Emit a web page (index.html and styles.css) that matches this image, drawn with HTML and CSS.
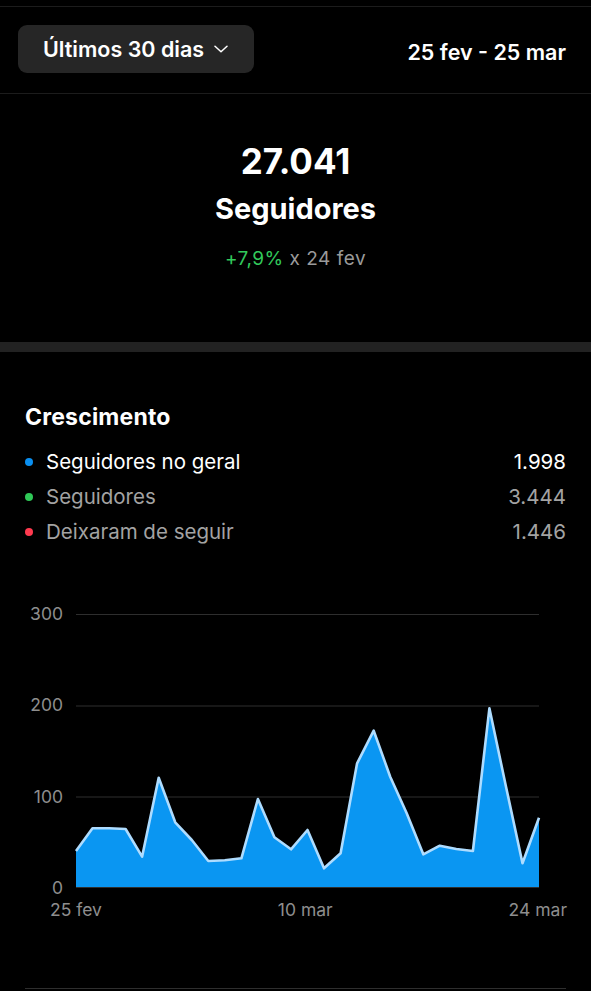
FILE: index.html
```html
<!DOCTYPE html>
<html lang="pt">
<head>
<meta charset="utf-8">
<title>Seguidores</title>
<link rel="stylesheet" href="styles.css">
</head>
<body>
<div class="page">
  <header class="header">
    <button class="range-btn">Últimos 30 dias
      <svg class="chev" width="14" height="8" viewBox="0 0 14 8"><path d="M1 1.2 L7 6.8 L13 1.2" fill="none" stroke="#fff" stroke-width="1.5" stroke-linecap="round" stroke-linejoin="round"/></svg>
    </button>
    <div class="date-range">25 fev - 25 mar</div>
  </header>

  <section class="summary">
    <div class="big-num">27.041</div>
    <div class="big-label">Seguidores</div>
    <div class="delta"><span class="pos">+7,9%</span> x 24 fev</div>
  </section>

  <div class="thick-sep"></div>

  <section class="growth">
    <h2 class="growth-title">Crescimento</h2>
    <ul class="legend">
      <li class="legend-row primary"><span class="dot blue"></span><span class="lname">Seguidores no geral</span><span class="lval">1.998</span></li>
      <li class="legend-row"><span class="dot green"></span><span class="lname">Seguidores</span><span class="lval">3.444</span></li>
      <li class="legend-row"><span class="dot red"></span><span class="lname">Deixaram de seguir</span><span class="lval">1.446</span></li>
    </ul>

    <div class="chart">
      <div class="y-axis">
        <span>300</span><span>200</span><span>100</span><span>0</span>
      </div>
      <svg class="plot" width="463" height="274" viewBox="0 0 463 274">
        <g stroke="#2e2e2e" stroke-width="1">
          <line x1="0" y1="0.5" x2="463" y2="0.5"/>
          <line x1="0" y1="92" x2="463" y2="92"/>
          <line x1="0" y1="183" x2="463" y2="183"/>
        </g>
        <polygon fill="#0a96f2" points="0,274 0,237 16.5,214.3 33.1,214.3 49.6,215 66.1,242.7 82.7,163.7 99.2,208.3 115.8,226 132.3,247 148.8,246.3 165.4,244.3 181.9,185 198.4,223.3 215,235.3 231.5,216 248,254.3 264.6,239.3 281.1,149.3 297.7,116.7 314.2,162.7 330.7,199.3 347.3,240.3 363.8,231.7 380.3,235 396.9,237 413.4,94.3 430,172.7 446.5,249.3 463,203.7 463,274"/>
        <polyline fill="none" stroke="#aedcff" stroke-width="2.6" stroke-linejoin="round" points="0,237 16.5,214.3 33.1,214.3 49.6,215 66.1,242.7 82.7,163.7 99.2,208.3 115.8,226 132.3,247 148.8,246.3 165.4,244.3 181.9,185 198.4,223.3 215,235.3 231.5,216 248,254.3 264.6,239.3 281.1,149.3 297.7,116.7 314.2,162.7 330.7,199.3 347.3,240.3 363.8,231.7 380.3,235 396.9,237 413.4,94.3 430,172.7 446.5,249.3 463,203.7"/>
        <line x1="0" y1="273.5" x2="463" y2="273.5" stroke="#2e2e2e" stroke-width="1"/>
      </svg>
    </div>
    <div class="x-axis">
      <span>25 fev</span><span>10 mar</span><span>24 mar</span>
    </div>
    <div class="bottom-line"></div>
  </section>
</div>
</body>
</html>
```

FILE: styles.css
```css
html, body {
  margin: 0;
  padding: 0;
  background: #000;
}
body {
  font-family: Inter, "Noto Sans", "Liberation Sans", sans-serif;
  color: #fff;
  width: 591px;
  height: 991px;
  overflow: hidden;
}
.page {
  padding-top: 6px;
}
.header {
  border-top: 1px solid #1c1c1c;
  border-bottom: 1px solid #1c1c1c;
  height: 86px;
  box-sizing: content-box;
  display: flex;
  align-items: center;
  justify-content: space-between;
  padding: 0 25px 0 18px;
}
.range-btn {
  margin-top: -3px;
  width: 236px;
  height: 48px;
  background: #262626;
  border: none;
  border-radius: 9px;
  color: #fff;
  font-family: inherit;
  font-size: 21.5px;
  font-weight: 600;
  line-height: 26px;
  display: flex;
  align-items: center;
  padding: 0 0 0 25px;
  gap: 10px;
}
.chev {
  display: block;
  margin-top: 1px;
}
.date-range {
  font-size: 21.5px;
  font-weight: 600;
  line-height: 26px;
  margin-top: 3px;
}
.summary {
  height: 248px;
  padding-top: 46px;
  box-sizing: border-box;
  display: flex;
  flex-direction: column;
  align-items: center;
}
.big-num {
  font-size: 35px;
  font-weight: 700;
  line-height: 42px;
}
.big-label {
  margin-top: 10px;
  font-size: 29px;
  font-weight: 700;
  line-height: 34px;
}
.delta {
  margin-top: 22px;
  font-size: 19px;
  line-height: 22px;
  letter-spacing: 0.5px;
  color: #9a9a9a;
}
.pos {
  color: #32c95b;
}
.thick-sep {
  height: 10px;
  background: #222;
}
.growth {
  padding: 52px 25px 0 25px;
}
.growth-title {
  margin: 0;
  font-size: 23px;
  font-weight: 700;
  line-height: 26px;
  letter-spacing: 0.2px;
}
.legend {
  list-style: none;
  margin: 14px 0 0 0;
  padding: 0;
}
.legend-row {
  display: flex;
  align-items: center;
  height: 35px;
  font-size: 20.5px;
  color: #a3a3a3;
}
.legend-row.primary {
  color: #fff;
}
.dot {
  width: 8px;
  height: 8px;
  border-radius: 50%;
  margin: 0 13px 0 0;
}
.dot.blue { background: #0a8ff0; }
.dot.green { background: #2fc857; }
.dot.red { background: #ff3a4f; }
.lname {
  flex: 1;
}
.lval {
  text-align: right;
}
.chart {
  margin-top: 65px;
  display: flex;
  align-items: flex-start;
}
.y-axis {
  width: 38px;
  height: 294px;
  margin-top: -10px;
  display: flex;
  flex-direction: column;
  justify-content: space-between;
  align-items: flex-end;
  font-size: 17.5px;
  line-height: 20px;
  color: #8e8e8e;
}
.plot {
  display: block;
  margin-left: 13px;
  overflow: visible;
}
.x-axis {
  display: flex;
  justify-content: space-between;
  margin: 2px -1px 0 25px;
  font-size: 17.5px;
  line-height: 20px;
  color: #8e8e8e;
}
.bottom-line {
  margin-top: 68px;
  border-top: 1px solid #2e2e2e;
}
```
